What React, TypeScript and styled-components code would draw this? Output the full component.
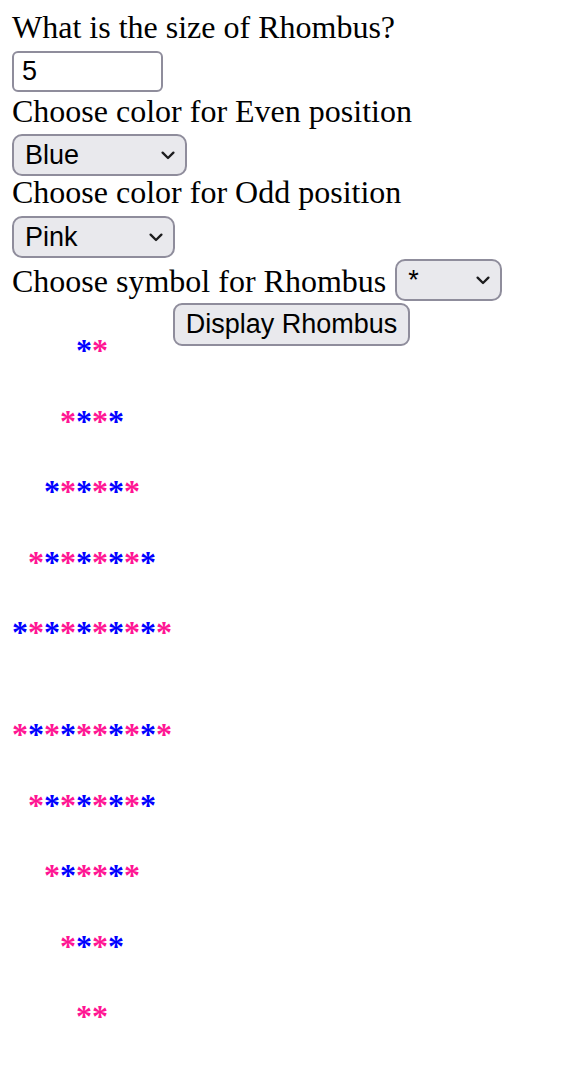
import React from "react";
import styled, { createGlobalStyle } from "styled-components";

const GlobalStyle = createGlobalStyle`
  html, body {
    margin: 0;
    padding: 0;
    background: #ffffff;
  }
  body {
    font-family: "Liberation Serif", "Times New Roman", serif;
    color: #000000;
  }
`;

const controlFont = `
  font-family: "Liberation Sans", Arial, Helvetica, sans-serif;
  font-size: 27px;
  color: #000000;
`;

const Page = styled.main`
  display: flex;
  flex-direction: column;
  align-items: flex-start;
  padding: 11px 12px 0;
`;

const Label = styled.label<{ $mt?: number }>`
  display: block;
  font-size: 32px;
  line-height: 32px;
  margin-top: ${(p) => p.$mt ?? 0}px;
  white-space: nowrap;
`;

const TextInput = styled.input`
  box-sizing: border-box;
  width: 151px;
  height: 41px;
  margin: 8px 0 0;
  padding: 0 8px;
  border: 2px solid #8f8d9c;
  border-radius: 6px;
  background: #ffffff;
  outline: none;
  ${controlFont}
`;

const SelectBox = styled.div<{ $w: number; $mt?: number }>`
  box-sizing: border-box;
  display: flex;
  align-items: center;
  width: ${(p) => p.$w}px;
  height: 42px;
  margin-top: ${(p) => p.$mt ?? 0}px;
  padding: 0 10px 0 11px;
  border: 2px solid #8f8d9c;
  border-radius: 10px;
  background: #e9e9ed;
`;

const NativeSelect = styled.select`
  appearance: none;
  -webkit-appearance: none;
  flex: 1;
  min-width: 0;
  margin: 0;
  padding: 0;
  border: 0;
  background: transparent;
  outline: none;
  ${controlFont}
`;

const Chevron = styled.svg`
  flex: none;
  width: 14px;
  height: 9px;
`;

const SymbolRow = styled.div`
  display: flex;
  align-items: flex-start;
  gap: 9px;
  margin-top: 1px;
`;

const Button = styled.button`
  box-sizing: border-box;
  width: 237px;
  height: 43px;
  margin: 2px 0 0 161px;
  padding: 0;
  border: 2px solid #8f8d9c;
  border-radius: 9px;
  background: #e9e9ed;
  ${controlFont}
`;

const Stars = styled.section`
  display: flex;
  flex-direction: column;
  gap: 33.5px;
  margin-top: -14px;
`;

const StarRow = styled.div<{ $indent: number; $break?: boolean }>`
  font-size: 32px;
  font-weight: 700;
  line-height: 37px;
  white-space: pre;
  padding-left: ${(p) => p.$indent * 16}px;
  margin-top: ${(p) => (p.$break ? 31.5 : 0)}px;
`;

const Star = styled.span<{ $pink: boolean }>`
  color: ${(p) => (p.$pink ? "#ff1493" : "#0000ff")};
`;

const rows: { seq: string; indent: number; brk?: boolean }[] = [
  { seq: "BP", indent: 4 },
  { seq: "PBPB", indent: 3 },
  { seq: "BPBPBP", indent: 2 },
  { seq: "PBPBPBPB", indent: 1 },
  { seq: "BPBPBPBPBP", indent: 0 },
  { seq: "PBPBPPBPBP", indent: 0, brk: true },
  { seq: "PBPBPBPB", indent: 1 },
  { seq: "PBPPBP", indent: 2 },
  { seq: "PBPB", indent: 3 },
  { seq: "PP", indent: 4 },
];

function Select({ w, mt, options, value }: { w: number; mt?: number; options: string[]; value: string }) {
  return (
    <SelectBox $w={w} $mt={mt}>
      <NativeSelect defaultValue={value}>
        {options.map((o) => (
          <option key={o} value={o}>
            {o}
          </option>
        ))}
      </NativeSelect>
      <Chevron viewBox="0 0 14 9" aria-hidden="true">
        <path d="M1.6 1.6 L7 7 L12.4 1.6" fill="none" stroke="#1c1c1e" strokeWidth="2.3" strokeLinecap="round" strokeLinejoin="round" />
      </Chevron>
    </SelectBox>
  );
}

export default function App() {
  return (
    <>
      <GlobalStyle />
      <Page>
        <Label>What is the size of Rhombus?</Label>
        <TextInput type="text" defaultValue="5" />
        <Label $mt={3}>Choose color for Even position</Label>
        <Select w={175} mt={7} options={["Blue", "Red", "Green", "Yellow"]} value="Blue" />
        <Label>Choose color for Odd position</Label>
        <Select w={163} mt={8} options={["Pink", "Orange", "Purple"]} value="Pink" />
        <SymbolRow>
          <Label $mt={6}>Choose symbol for Rhombus</Label>
          <Select w={107} options={["*", "#", "@", "+"]} value="*" />
        </SymbolRow>
        <Button type="button">Display Rhombus</Button>
        <Stars>
          {rows.map((r, i) => (
            <StarRow key={i} $indent={r.indent} $break={r.brk}>
              {r.seq.split("").map((c, j) => (
                <Star key={j} $pink={c === "P"}>
                  *
                </Star>
              ))}
            </StarRow>
          ))}
        </Stars>
      </Page>
    </>
  );
}
